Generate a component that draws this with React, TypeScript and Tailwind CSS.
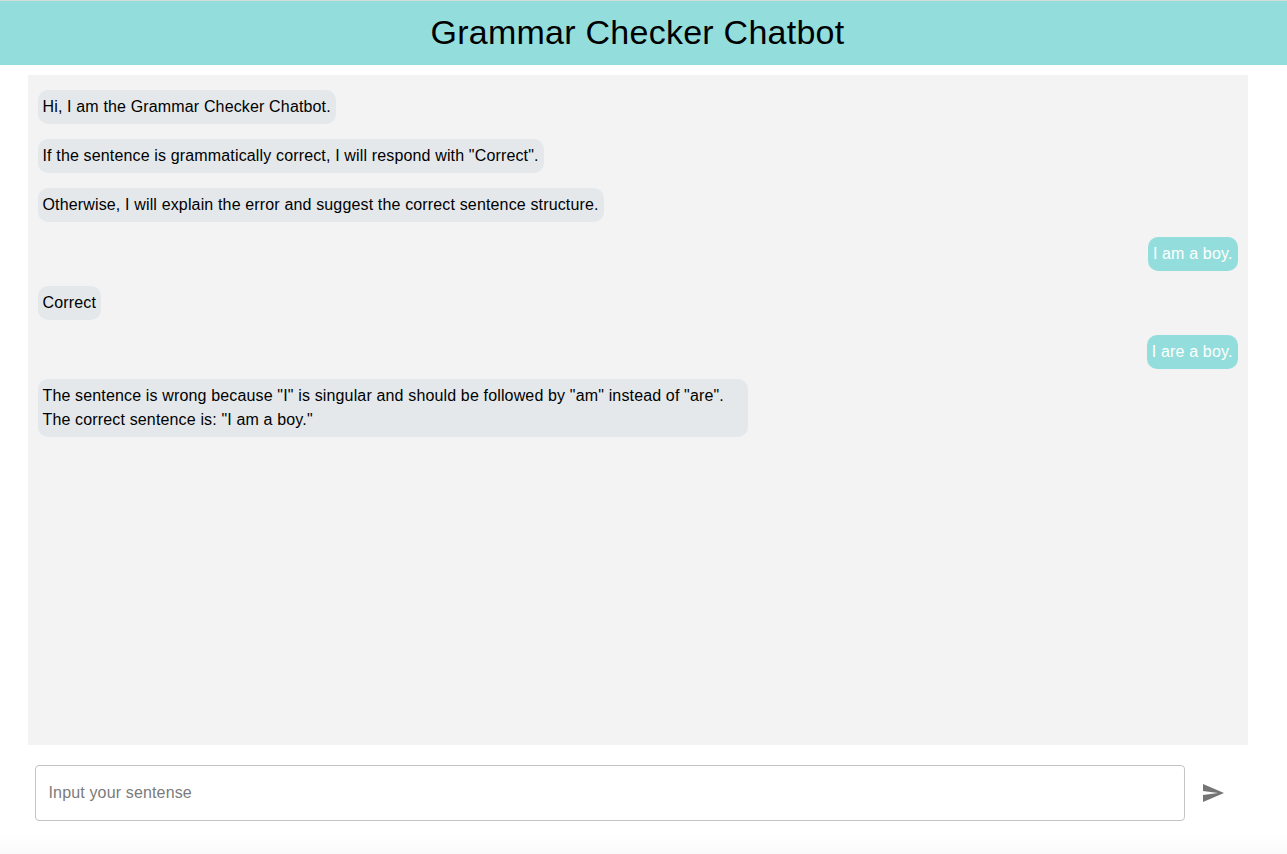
import React from "react";

type Message = { text: string; mine?: boolean; multi?: boolean };

const messages: Message[] = [
  { text: "Hi, I am the Grammar Checker Chatbot." },
  { text: 'If the sentence is grammatically correct, I will respond with "Correct".' },
  { text: "Otherwise, I will explain the error and suggest the correct sentence structure." },
  { text: "I am a boy.", mine: true },
  { text: "Correct" },
  { text: "I are a boy.", mine: true },
  {
    text: 'The sentence is wrong because "I" is singular and should be followed by "am" instead of "are". The correct sentence is: "I am a boy."',
    multi: true,
  },
];

function Bubble({ text, mine, multi }: Message) {
  const tone = mine
    ? "self-end bg-[#93dedc] pl-[4.5px] pr-[5.5px] text-white"
    : "self-start bg-[#e4e8eb] pl-[4.5px] pr-[5px] text-black";
  const size = multi ? "-mt-[5px] w-[710px]" : "";
  return (
    <div className={`rounded-[10px] py-[5px] leading-6 tracking-[0.15px] ${tone} ${size}`}>{text}</div>
  );
}

export default function App() {
  return (
    <div className="flex h-[854px] flex-col bg-white font-['Liberation_Sans',Arial,sans-serif] text-base text-black">
      <header className="flex h-[65px] shrink-0 justify-center border-t border-[#d5dcdc] bg-[#93dedc]">
        <h1 className="mr-[12px] mt-[10px] text-[34px] leading-[42px] tracking-[0.25px]">Grammar Checker Chatbot</h1>
      </header>
      <main className="ml-7 mt-2.5 flex h-[670px] w-[1220px] shrink-0 flex-col gap-[15px] bg-[#f3f3f3] px-2.5 py-[15px]">
        {messages.map((m, i) => (
          <Bubble key={i} {...m} />
        ))}
      </main>
      <form className="ml-[35px] mt-5 flex items-center" onSubmit={(e) => e.preventDefault()}>
        <input
          className="h-14 w-[1150px] rounded border border-[#c4c4c4] pl-[12.5px] pr-[13px] tracking-[0.15px] outline-none placeholder:text-[#7b7b7b]"
          placeholder="Input your sentense"
        />
        <button type="submit" aria-label="Send" className="ml-4 text-[#757575]">
          <svg viewBox="0 0 24 24" className="size-6" fill="currentColor">
            <path d="M2.01 21 23 12 2.01 3 2 10l15 2-15 2z" />
          </svg>
        </button>
      </form>
      <div className="mt-auto h-5 bg-gradient-to-b from-white to-[#fafafa]" />
    </div>
  );
}
